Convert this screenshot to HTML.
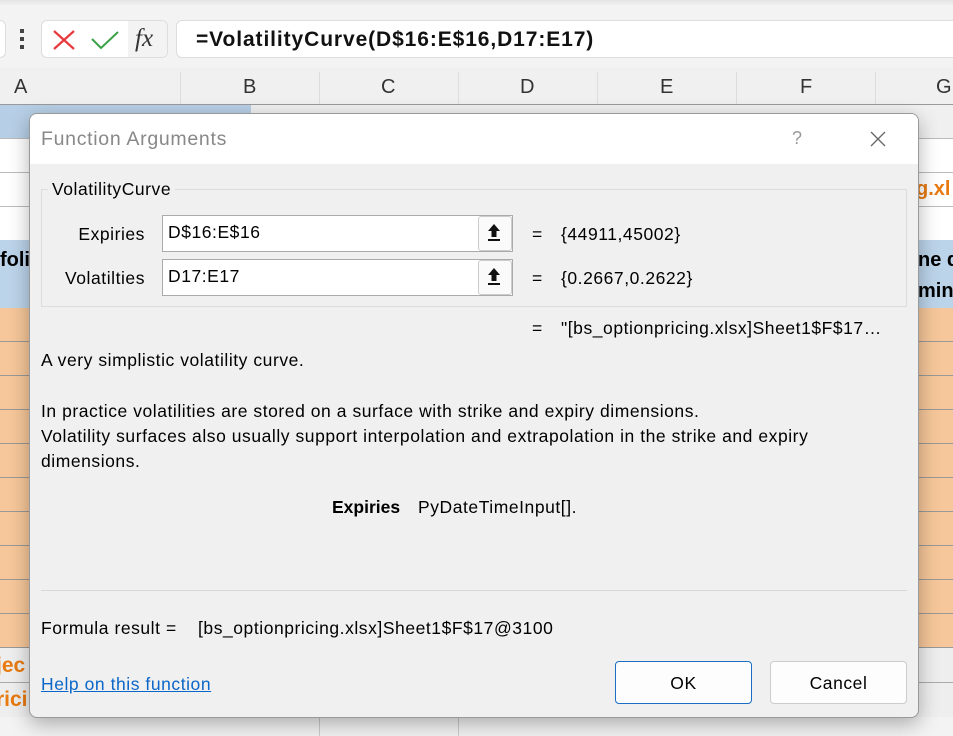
<!DOCTYPE html>
<html><head><meta charset="utf-8"><style>
*{margin:0;padding:0;box-sizing:border-box}
body{width:953px;height:736px;overflow:hidden;background:#f3f3f3;font-family:"Liberation Sans",sans-serif;position:relative;color:#000}
.a{position:absolute;white-space:nowrap}
.t{font-size:17.5px;line-height:20px;letter-spacing:0.55px}
</style></head><body>
<div class="a" style="left:0;top:0;width:953px;height:6px;background:linear-gradient(#e4e4e4,#f3f3f3)"></div>
<div class="a" style="left:-10px;top:20px;width:16px;height:38px;background:#fff;border:1px solid #ddd;border-radius:6px"></div>
<div class="a" style="left:20px;top:29px;width:4px;height:4px;background:#444"></div>
<div class="a" style="left:20px;top:37px;width:4px;height:4px;background:#444"></div>
<div class="a" style="left:20px;top:45px;width:4px;height:4px;background:#444"></div>
<div class="a" style="left:41px;top:20px;width:127px;height:38px;background:#fff;border:1px solid #ddd;border-radius:6px;overflow:hidden">
 <div class="a" style="left:86px;top:0;width:41px;height:38px;background:#f3f3f3"></div>
 <svg class="a" style="left:10px;top:8px" width="24" height="22"><path d="M2 2L22 20M22 2L2 20" stroke="#e8393a" stroke-width="2.2"/></svg>
 <svg class="a" style="left:48px;top:9px" width="30" height="20"><path d="M2 9L11 18L28 2" stroke="#3aa045" stroke-width="2" fill="none"/></svg>
 <div class="a" style="left:93px;top:4px;font-family:'Liberation Serif',serif;font-style:italic;font-size:25px;color:#333">fx</div>
</div>
<div class="a" style="left:176px;top:20px;width:790px;height:38px;background:#fff;border:1px solid #ddd;border-radius:6px"></div>
<div class="a" style="left:196px;top:28px;font-size:21px;font-weight:bold;color:#111;letter-spacing:0.9px">=VolatilityCurve(D$16:E$16,D17:E17)</div>
<div class="a" style="left:0;top:68px;width:953px;height:37px;background:#f0f0f0;border-bottom:1px solid #9a9a9a"></div>
<div class="a" style="left:180px;top:72px;width:1px;height:32px;background:#ddd"></div>
<div class="a" style="left:319px;top:72px;width:1px;height:32px;background:#ddd"></div>
<div class="a" style="left:458px;top:72px;width:1px;height:32px;background:#ddd"></div>
<div class="a" style="left:597px;top:72px;width:1px;height:32px;background:#ddd"></div>
<div class="a" style="left:736px;top:72px;width:1px;height:32px;background:#ddd"></div>
<div class="a" style="left:875px;top:72px;width:1px;height:32px;background:#ddd"></div>
<div class="a" style="left:14px;top:76px;font-size:20px;color:#333">A</div>
<div class="a" style="left:243px;top:76px;font-size:20px;color:#333">B</div>
<div class="a" style="left:381px;top:76px;font-size:20px;color:#333">C</div>
<div class="a" style="left:520px;top:76px;font-size:20px;color:#333">D</div>
<div class="a" style="left:660px;top:76px;font-size:20px;color:#333">E</div>
<div class="a" style="left:800px;top:76px;font-size:20px;color:#333">F</div>
<div class="a" style="left:936px;top:76px;font-size:20px;color:#333">G</div>
<div class="a" style="left:0;top:105px;width:953px;height:612px;background:#fff"></div>
<div class="a" style="left:0;top:105px;width:251px;height:33px;background:#b7cfe6"></div>
<div class="a" style="left:251px;top:105px;width:702px;height:33px;background:#f0f0f0"></div>
<div class="a" style="left:0;top:138px;width:953px;height:1px;background:#bbb"></div>
<div class="a" style="left:0;top:172px;width:953px;height:1px;background:#bbb"></div>
<div class="a" style="left:0;top:206px;width:953px;height:1px;background:#bbb"></div>
<div class="a" style="left:916px;top:178px;font-size:20px;font-weight:bold;color:#e87a10">g.xl</div>
<div class="a" style="left:0;top:240px;width:953px;height:68px;background:#bcd4ea"></div>
<div class="a" style="left:0;top:249px;font-size:20px;font-weight:bold">foli</div>
<div class="a" style="left:918px;top:249px;font-size:20px;font-weight:bold">ne d</div>
<div class="a" style="left:918px;top:280px;font-size:20px;font-weight:bold">min</div>
<div class="a" style="left:0;top:308px;width:953px;height:340px;background:repeating-linear-gradient(#f6c79a 0 33px,#999 33px 34px)"></div>
<div class="a" style="left:0;top:648px;width:953px;height:69px;background:repeating-linear-gradient(#eeeeee 0 34px,#aaa 34px 35px)"></div>
<div class="a" style="left:-4px;top:654px;font-size:21px;font-weight:bold;color:#e87a10">jec</div>
<div class="a" style="left:-4px;top:688px;font-size:21px;font-weight:bold;color:#e87a10">rici</div>
<div class="a" style="left:0;top:717px;width:953px;height:19px;background:#f3f3f3"></div>
<div class="a" style="left:319px;top:717px;width:1px;height:19px;background:#ccc"></div>
<div class="a" style="left:458px;top:717px;width:1px;height:19px;background:#ccc"></div>
<div class="a" style="left:29px;top:113px;width:890px;height:605px;background:#f0f0f0;border:1px solid #999;border-radius:8px;box-shadow:0 6px 20px rgba(0,0,0,.3);overflow:hidden">
 <div class="a" style="left:0;top:0;width:890px;height:50px;background:#fff"></div>
 <div class="a" style="left:11px;top:14px;font-size:19.5px;color:#888;letter-spacing:0.7px">Function Arguments</div>
 <div class="a" style="left:762px;top:14px;font-size:18px;color:#999">?</div>
 <svg class="a" style="left:840px;top:17px" width="16" height="16"><path d="M1 1L15 15M15 1L1 15" stroke="#666" stroke-width="1.3"/></svg>
 <div class="a" style="left:11px;top:75px;width:866px;height:118px;border:1px solid #dcdcdc"></div>
 <div class="a t" style="left:18px;top:65px;background:#f0f0f0;padding:0 4px">VolatilityCurve</div>
 <div class="a t" style="left:0;top:110px;width:115px;text-align:right">Expiries</div>
 <div class="a t" style="left:0;top:154px;width:115px;text-align:right">Volatilties</div>
 <div class="a" style="left:132px;top:101px;width:351px;height:37px;background:#fff;border:1px solid #aaa"></div>
 <div class="a" style="left:132px;top:145px;width:351px;height:37px;background:#fff;border:1px solid #aaa"></div>
 <div class="a t" style="left:138px;top:108px">D$16:E$16</div>
 <div class="a t" style="left:138px;top:152px">D17:E17</div>
 <div class="a" style="left:448px;top:102px;width:34px;height:35px;background:#fafafa;border:1px solid #ccc;border-radius:3px"></div>
 <div class="a" style="left:448px;top:146px;width:34px;height:35px;background:#fafafa;border:1px solid #ccc;border-radius:3px"></div>
 <svg class="a" style="left:456px;top:109px" width="16" height="20"><path d="M8 1L2 8H5.5V14H10.5V8H14Z" fill="#111"/><rect x="2" y="16" width="12" height="2" fill="#111"/></svg>
 <svg class="a" style="left:456px;top:153px" width="16" height="20"><path d="M8 1L2 8H5.5V14H10.5V8H14Z" fill="#111"/><rect x="2" y="16" width="12" height="2" fill="#111"/></svg>
 <div class="a t" style="left:502px;top:110px">=</div>
 <div class="a t" style="left:531px;top:110px">{44911,45002}</div>
 <div class="a t" style="left:502px;top:154px">=</div>
 <div class="a t" style="left:531px;top:154px">{0.2667,0.2622}</div>
 <div class="a t" style="left:502px;top:204px">=</div>
 <div class="a t" style="left:531px;top:204px">"[bs_optionpricing.xlsx]Sheet1$F$17…</div>
 <div class="a t" style="left:11px;top:236px">A very simplistic volatility curve.</div>
 <div class="a t" style="left:11px;top:287px">In practice volatilities are stored on a surface with strike and expiry dimensions.</div>
 <div class="a t" style="left:11px;top:312px">Volatility surfaces also usually support interpolation and extrapolation in the strike and expiry</div>
 <div class="a t" style="left:11px;top:337px">dimensions.</div>
 <div class="a t" style="left:302px;top:383px;font-weight:bold;letter-spacing:0">Expiries</div>
 <div class="a t" style="left:388px;top:383px">PyDateTimeInput[].</div>
 <div class="a" style="left:11px;top:476px;width:866px;height:1px;background:#d8d8d8"></div>
 <div class="a t" style="left:11px;top:504px">Formula result =</div>
 <div class="a t" style="left:168px;top:504px">[bs_optionpricing.xlsx]Sheet1$F$17@3100</div>
 <div class="a t" style="left:11px;top:560px;color:#0a66c8;text-decoration:underline">Help on this function</div>
 <div class="a t" style="left:585px;top:547px;width:137px;height:43px;background:#fdfdfd;border:1px solid #1a6fc4;border-radius:4px;text-align:center;line-height:43px">OK</div>
 <div class="a t" style="left:740px;top:547px;width:137px;height:43px;background:#fdfdfd;border:1px solid #ccc;border-radius:4px;text-align:center;line-height:43px">Cancel</div>
</div>
</body></html>
